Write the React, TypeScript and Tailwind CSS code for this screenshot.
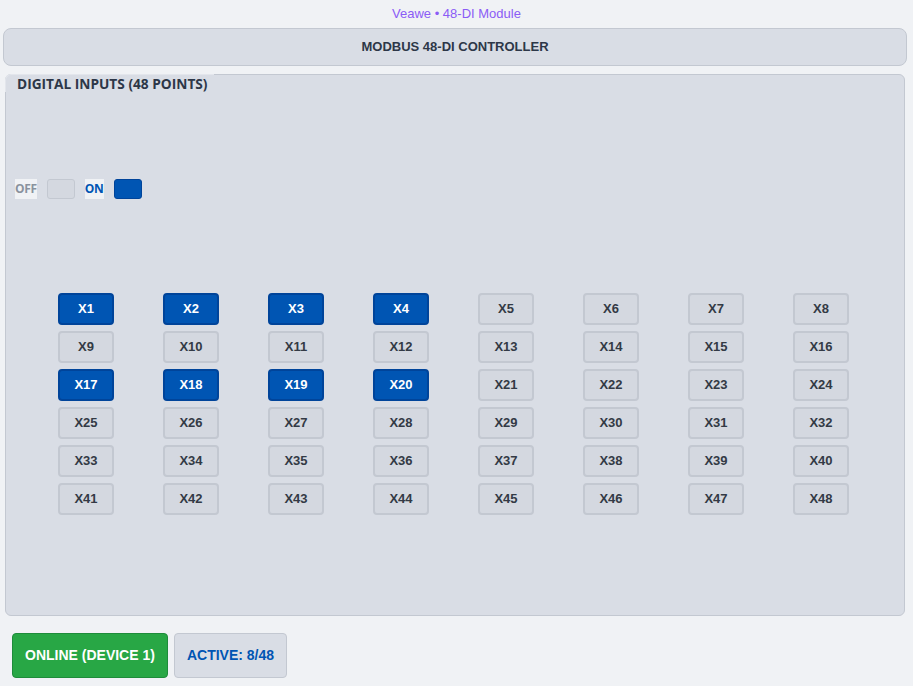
import React from "react";

const ACTIVE = new Set([1, 2, 3, 4, 17, 18, 19, 20]);

export default function App() {
  const points = Array.from({ length: 48 }, (_, i) => i + 1);
  return (
    <div className="w-[913px] h-[686px] bg-[#f0f2f5] overflow-hidden font-['Liberation_Sans',Arial,sans-serif]">
      <div className="h-[28px] flex items-center justify-center text-[13px] text-[#8b5cf6]">
        Veawe • 48-DI Module
      </div>
      <div className="ml-[3px] w-[904px] h-[38px] rounded-[8px] border border-[#c3c8d1] bg-[#d9dde5] flex items-center justify-center text-[13px] font-bold text-[#2d3748]">
        MODBUS 48-DI CONTROLLER
      </div>
      <div className="mt-[8px] ml-[5px] w-[900px] h-[542px] rounded-[6px] border border-[#c3c8d1] bg-[#d9dde5] flex flex-col">
        <div className="-mt-px -ml-px w-[209px] h-[18px] bg-[#d9dde5] border-t border-l border-[#e3e6ec] rounded-tl-[6px] pl-[11px] text-[13.7px] leading-[18px] font-bold text-[#2d3748] font-['Open_Sans',sans-serif]">
          DIGITAL INPUTS (48 POINTS)
        </div>
        <div className="mt-[87px] ml-[9px] flex items-center h-[20px]">
          <div className="h-[20px] bg-[#f0f2f5] flex items-center text-[12px] tracking-[-0.3px] font-bold text-[#8a929e] font-['Open_Sans',sans-serif]">
            OFF
          </div>
          <div className="ml-[10px] w-[28px] h-[20px] rounded-[3px] border border-[#c3c8d1] bg-[#d4d8e0]" />
          <div className="ml-[10px] h-[20px] bg-[#f0f2f5] flex items-center text-[12px] tracking-[-0.3px] font-bold text-[#0055b3] font-['Open_Sans',sans-serif]">
            ON
          </div>
          <div className="ml-[10px] w-[28px] h-[20px] rounded-[3px] border border-[#00449a] bg-[#0055b3]" />
        </div>
        <div className="mt-[94px] ml-[52px] grid grid-cols-[repeat(8,56px)] gap-x-[49px] gap-y-[6px]">
          {points.map((p) => {
            const on = ACTIVE.has(p);
            return (
              <div
                key={p}
                className={
                  on
                    ? "h-[32px] rounded-[4px] border-2 border-[#00449a] bg-[#0055b3] text-white flex items-center justify-center text-[13px] font-bold"
                    : "h-[32px] rounded-[4px] border-2 border-[#c3c8d1] bg-[#d4d8e0] text-[#333a45] flex items-center justify-center text-[13px] font-bold"
                }
              >
                X{p}
              </div>
            );
          })}
        </div>
      </div>
      <div className="mt-[17px] ml-[12px] flex gap-[6px]">
        <div className="h-[45px] px-[12px] rounded-[4px] border border-[#1e8c3a] bg-[#28a745] text-white text-[14px] font-bold flex items-center">
          ONLINE (DEVICE 1)
        </div>
        <div className="h-[45px] px-[12px] rounded-[4px] border border-[#c3c8d1] bg-[#d9dde5] text-[#0055b3] text-[14px] font-bold flex items-center">
          ACTIVE: 8/48
        </div>
      </div>
    </div>
  );
}
